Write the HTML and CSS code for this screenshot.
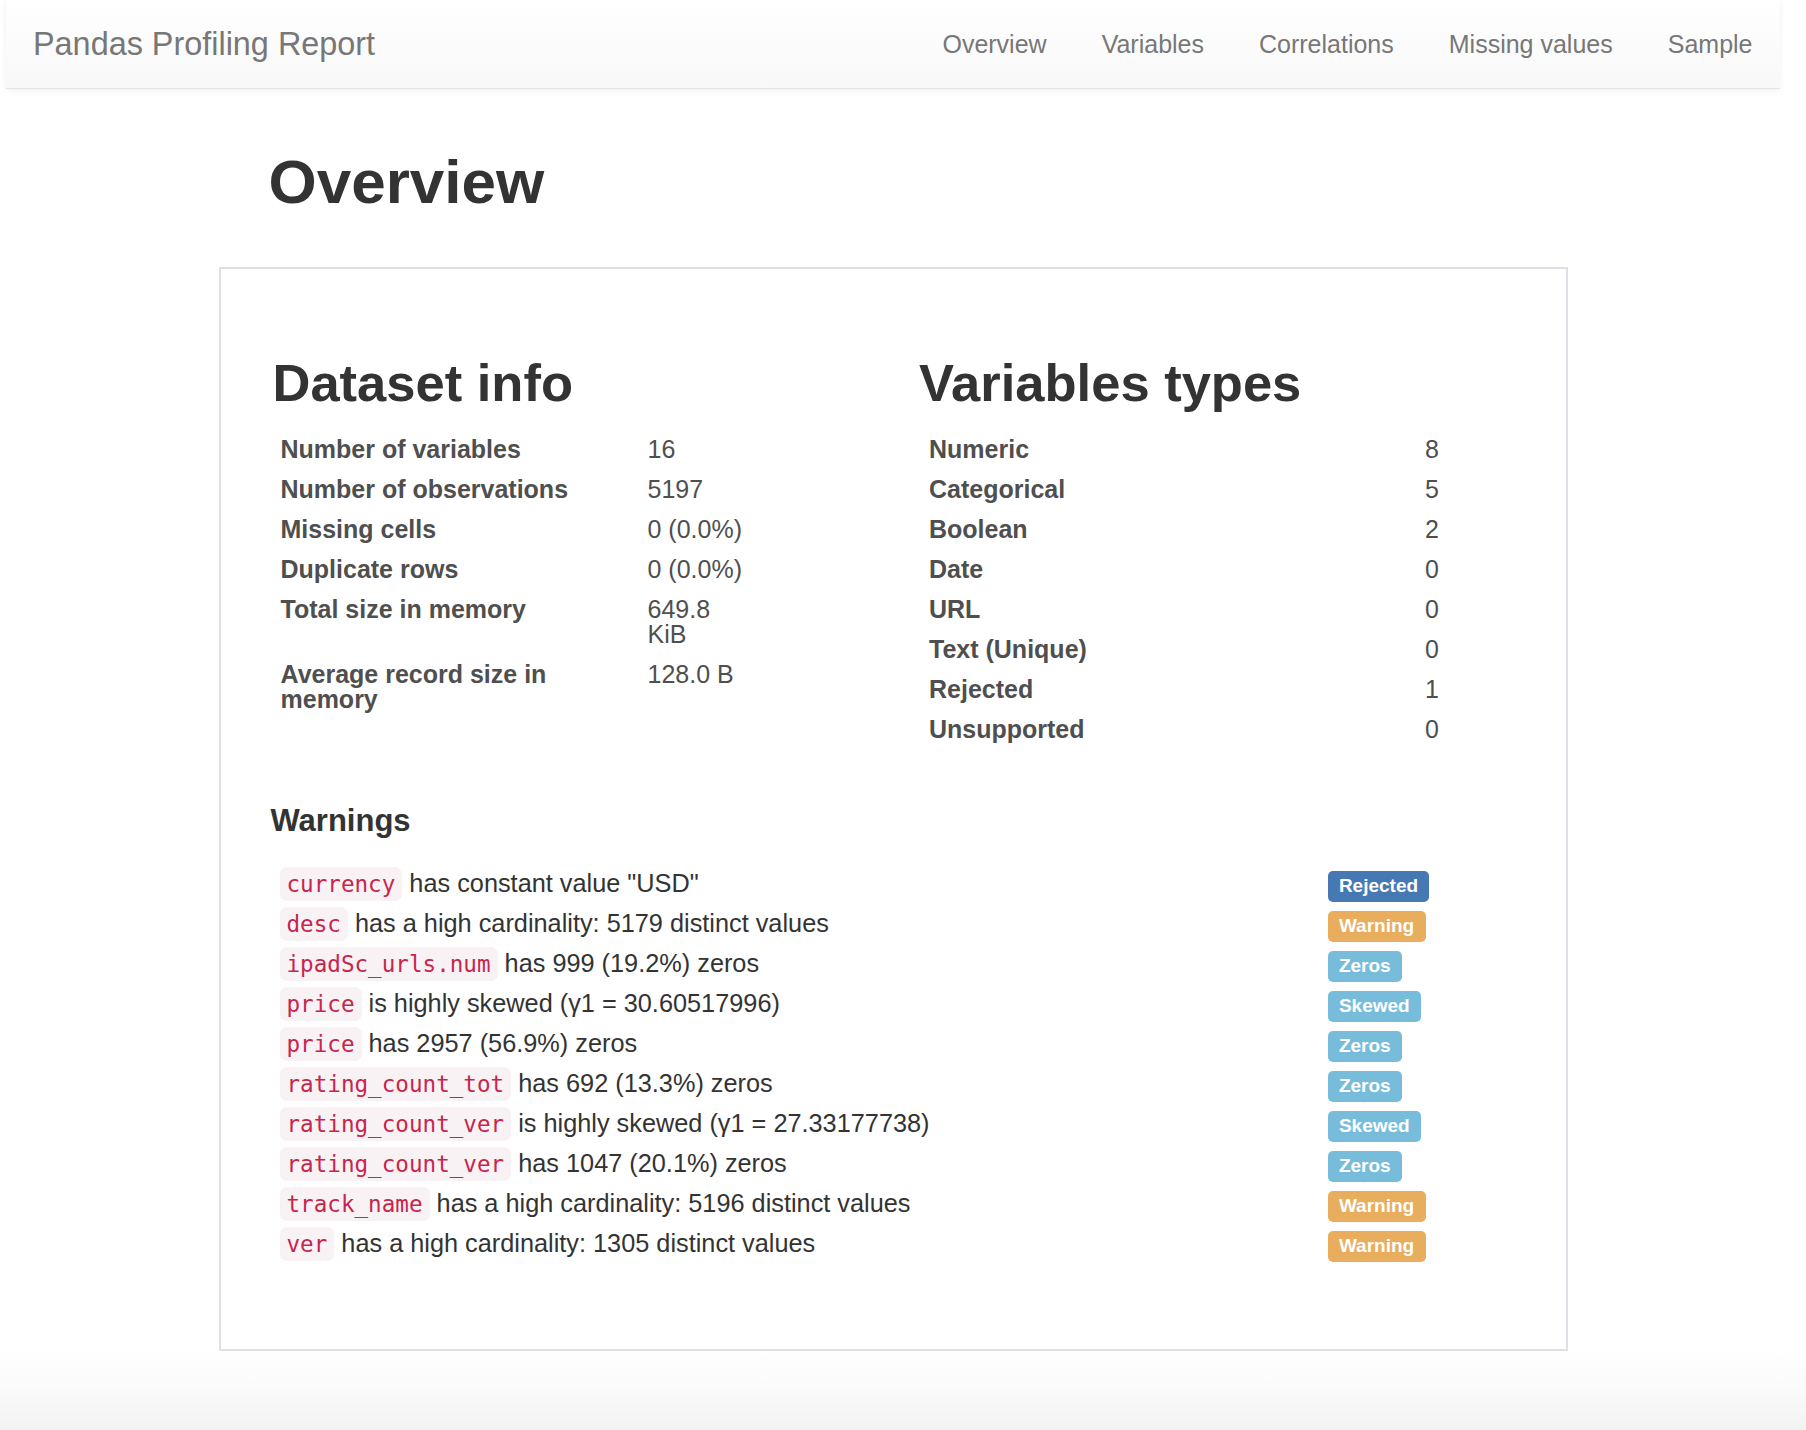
FILE: index.html
```html
<!DOCTYPE html>
<html lang="en">
<head>
<meta charset="utf-8">
<title>Pandas Profiling Report</title>
<link rel="stylesheet" href="styles.css">
</head>
<body>
<div class="frame">
  <nav class="navbar">
    <a class="brand" href="#">Pandas Profiling Report</a>
    <ul class="nav">
      <li><a href="#overview">Overview</a></li>
      <li><a href="#variables">Variables</a></li>
      <li><a href="#correlations">Correlations</a></li>
      <li><a href="#missing">Missing values</a></li>
      <li><a href="#sample">Sample</a></li>
    </ul>
  </nav>

  <main class="container">
    <h1 class="page-title" id="overview">Overview</h1>
    <section class="panel">
      <div class="cols">
        <div class="col">
          <h2 class="section-title">Dataset info</h2>
          <table class="stats stats-info">
            <tbody>
              <tr><th>Number of variables</th><td>16</td></tr>
              <tr><th>Number of observations</th><td>5197</td></tr>
              <tr><th>Missing cells</th><td>0 (0.0%)</td></tr>
              <tr><th>Duplicate rows</th><td>0 (0.0%)</td></tr>
              <tr><th>Total size in memory</th><td>649.8 KiB</td></tr>
              <tr><th>Average record size in memory</th><td>128.0 B</td></tr>
            </tbody>
          </table>
        </div>
        <div class="col">
          <h2 class="section-title">Variables types</h2>
          <table class="stats stats-types">
            <tbody>
              <tr><th>Numeric</th><td>8</td></tr>
              <tr><th>Categorical</th><td>5</td></tr>
              <tr><th>Boolean</th><td>2</td></tr>
              <tr><th>Date</th><td>0</td></tr>
              <tr><th>URL</th><td>0</td></tr>
              <tr><th>Text (Unique)</th><td>0</td></tr>
              <tr><th>Rejected</th><td>1</td></tr>
              <tr><th>Unsupported</th><td>0</td></tr>
            </tbody>
          </table>
        </div>
      </div>

      <h4 class="warnings-title">Warnings</h4>
      <table class="warnings">
        <tbody>
          <tr><td class="w-text"><code>currency</code> has constant value "USD"</td><td class="w-badge"><span class="label label-primary">Rejected</span></td></tr>
          <tr><td class="w-text"><code>desc</code> has a high cardinality: 5179 distinct values</td><td class="w-badge"><span class="label label-warning">Warning</span></td></tr>
          <tr><td class="w-text"><code>ipadSc_urls.num</code> has 999 (19.2%) zeros</td><td class="w-badge"><span class="label label-info">Zeros</span></td></tr>
          <tr><td class="w-text"><code>price</code> is highly skewed (γ1 = 30.60517996)</td><td class="w-badge"><span class="label label-info">Skewed</span></td></tr>
          <tr><td class="w-text"><code>price</code> has 2957 (56.9%) zeros</td><td class="w-badge"><span class="label label-info">Zeros</span></td></tr>
          <tr><td class="w-text"><code>rating_count_tot</code> has 692 (13.3%) zeros</td><td class="w-badge"><span class="label label-info">Zeros</span></td></tr>
          <tr><td class="w-text"><code>rating_count_ver</code> is highly skewed (γ1 = 27.33177738)</td><td class="w-badge"><span class="label label-info">Skewed</span></td></tr>
          <tr><td class="w-text"><code>rating_count_ver</code> has 1047 (20.1%) zeros</td><td class="w-badge"><span class="label label-info">Zeros</span></td></tr>
          <tr><td class="w-text"><code>track_name</code> has a high cardinality: 5196 distinct values</td><td class="w-badge"><span class="label label-warning">Warning</span></td></tr>
          <tr><td class="w-text"><code>ver</code> has a high cardinality: 1305 distinct values</td><td class="w-badge"><span class="label label-warning">Warning</span></td></tr>
        </tbody>
      </table>
    </section>
  </main>
</div>
<div class="bottom-fade"></div>
</body>
</html>
```

FILE: styles.css
```css
* {
  box-sizing: border-box;
}

html, body {
  margin: 0;
  padding: 0;
  background: #fff;
}

body {
  font-family: "Liberation Sans", Arial, Helvetica, sans-serif;
  font-size: 24px;
  color: #333;
}

.frame {
  padding: 0 26px 0 6px;
}

/* ---------- navbar ---------- */
.navbar {
  height: 89px;
  display: flex;
  align-items: center;
  background: linear-gradient(to bottom, #ffffff 0%, #f8f8f8 100%);
  border-bottom: 1px solid #e3e3e3;
  box-shadow: 0 2px 7px rgba(0, 0, 0, 0.06);
  position: relative;
  z-index: 1;
}

.brand {
  padding-left: 27px;
  font-size: 32.4px;
  color: #777;
  text-decoration: none;
  line-height: 1;
}

.nav {
  list-style: none;
  margin: 0 0 0 auto;
  padding: 0;
  display: flex;
}

.nav a {
  display: block;
  padding: 0 27.5px;
  font-size: 25px;
  line-height: 1;
  color: #777;
  text-decoration: none;
}

/* ---------- main ---------- */
.container {
  width: 1349px;
  margin: 0 auto;
}

.page-title {
  margin: 58px 0 50px 50px;
  font-size: 62px;
  line-height: 70px;
  font-weight: 700;
  color: #333;
}

.panel {
  border: 2px solid #e0dfe6;
  padding: 85px 49px 86px 51px;
}

.cols {
  display: grid;
  grid-template-columns: 1fr 1fr;
  column-gap: 50px;
}

.section-title {
  margin: 0 0 17px;
  font-size: 52.5px;
  line-height: 58px;
  font-weight: 700;
  color: #333;
}

.col:first-child .section-title {
  margin-left: 1px;
}

.stats {
  border-collapse: collapse;
  table-layout: fixed;
}

.stats th,
.stats td {
  padding: 7.5px 9px;
  line-height: 25px;
  font-size: 25px;
  color: #4f4f4f;
  text-align: left;
  vertical-align: top;
}

.stats th {
  font-weight: 700;
}

.stats td {
  font-weight: 400;
}

.stats-info {
  width: 485px;
}

.stats-info th {
  width: 367px;
}

.stats-info td {
  width: 118px;
}

.stats-types {
  width: 560px;
}

.stats-types th {
  width: 498px;
  padding-left: 10px;
}

.stats-types td {
  width: 62px;
  padding-left: 8px;
}

.warnings-title {
  margin: 54px 0 25px -1px;
  font-size: 31px;
  line-height: 35px;
  font-weight: 700;
  color: #333;
}

.warnings {
  width: 100%;
  border-collapse: collapse;
  table-layout: fixed;
}

.warnings td {
  padding: 7.5px 9px;
  line-height: 25px;
  font-size: 25.3px;
  color: #333;
  white-space: nowrap;
}

.warnings td.w-text {
  padding-left: 8px;
}

.warnings td.w-badge {
  width: 198px;
}

code {
  font-family: "DejaVu Sans Mono", "Liberation Mono", monospace;
  font-size: 22.6px;
  line-height: 1;
  padding: 4px 7px;
  color: #c7254e;
  background-color: #f9f2f4;
  border-radius: 7px;
}

.label {
  display: inline;
  font-size: 19px;
  font-weight: 700;
  line-height: 1;
  color: #fff;
  padding: 4px 11.4px 6px;
  border-radius: 5px;
  white-space: nowrap;
  vertical-align: baseline;
}

.label-primary {
  background-color: #4679b3;
}

.label-warning {
  background-color: #e8ae5e;
}

.label-info {
  background-color: #77bddb;
}

/* ---------- bottom ---------- */
.bottom-fade {
  height: 79px;
  background: linear-gradient(to bottom, #ffffff 0%, #fbfbfb 45%, #f2f2f2 100%);
}
```
